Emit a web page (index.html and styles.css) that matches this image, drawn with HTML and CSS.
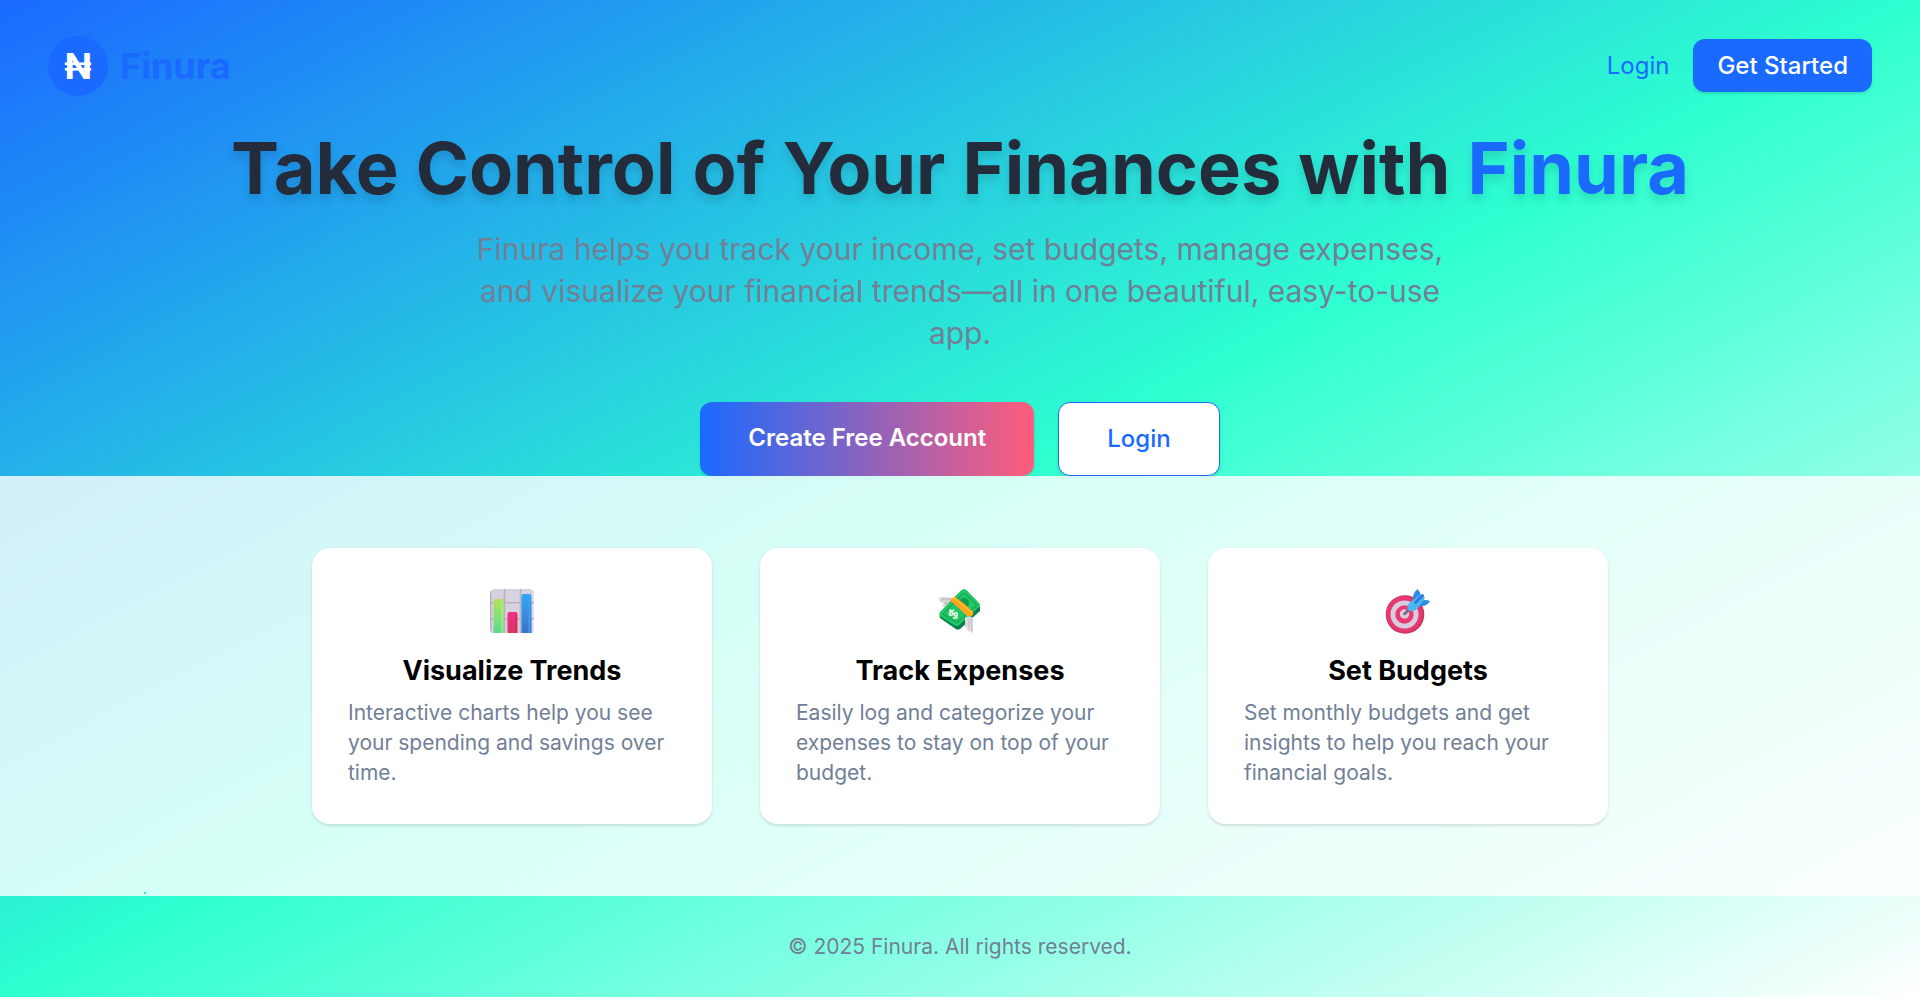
FILE: index.html
```html
<!DOCTYPE html>
<html lang="en">
<head>
<meta charset="utf-8">
<title>Finura</title>
<link rel="stylesheet" href="styles.css">
</head>
<body>
<div class="page">
  <header class="nav">
    <div class="brand"><span class="brand-mark">₦</span><span class="brand-name">Finura</span></div>
    <nav class="nav-links">
      <a class="nav-login">Login</a>
      <a class="nav-cta">Get Started</a>
    </nav>
  </header>
  <main class="hero">
    <h1 class="hero-title">Take Control of Your Finances with <span class="accent">Finura</span></h1>
    <p class="hero-text">Finura helps you track your income, set budgets, manage expenses, and visualize your financial trends—all in one beautiful, easy-to-use app.</p>
    <div class="hero-actions">
      <a class="btn btn-primary">Create Free Account</a>
      <a class="btn btn-outline">Login</a>
    </div>
  </main>
  <section class="features">
    <i class="speck"></i>
    <article class="card">
      <svg class="card-icon" viewBox="0 0 44 44">
        <defs>
          <linearGradient id="g1" x2="0" y2="1"><stop stop-color="#b4e25a"/><stop offset="1" stop-color="#59dc8f"/></linearGradient>
          <linearGradient id="g2" x2="0" y2="1"><stop stop-color="#f0308a"/><stop offset="1" stop-color="#da3562"/></linearGradient>
          <linearGradient id="g3" x2="0" y2="1"><stop stop-color="#35a7f8"/><stop offset="1" stop-color="#3a72c8"/></linearGradient>
          <clipPath id="panel"><rect width="44" height="45" rx="5"/></clipPath>
        </defs>
        <g clip-path="url(#panel)">
          <rect width="44" height="44" fill="#d8d1df"/>
          <path d="M0 0h1.5v44H0z" fill="#b8b1bd"/>
          <path d="M42 0h2v44h-2z" fill="#e6dcf2"/>
          <path d="M14.5 0v44M30.5 0v44M0 13.7h44M0 29.8h44" stroke="#b9b3bd" stroke-width="1.6"/>
          <path d="M3.5 44V12q0-2 2-2h6q2 0 2 2v32z" fill="url(#g1)"/>
          <path d="M11.8 12v32" stroke="#a5f07d" stroke-width="1.4"/>
          <path d="M17.5 44V25q0-2 2-2h6q2 0 2 2v19z" fill="url(#g2)"/>
          <path d="M26.3 25v19" stroke="#ca315f" stroke-width="1.6"/>
          <path d="M31.5 44V7q0-2 2-2h6q2 0 2 2v37z" fill="url(#g3)"/>
          <path d="M39.2 7v37" stroke="#3fa1ed" stroke-width="1.6"/>
        </g>
      </svg>
      <h3 class="card-title">Visualize Trends</h3>
      <p class="card-text">Interactive charts help you see your spending and savings over time.</p>
    </article>
    <article class="card">
      <svg class="card-icon" viewBox="0 0 44 44">
        <path d="M-1 8.500q10-1 18 1l-8 10q-3-1-5-4 2 0 2-1-4-1-6-4 2 0 3-1-3 0-4-1z" fill="#d9d5d9"/>
        <path d="M3 10h11M6 14h7" stroke="#b7b2b8" stroke-width="1"/>
        <path d="M27 27q7-3 8 3v14q-2 0-3-3l-1 2q-2-2-2-5l-1 2q-3-7-1-13z" fill="#dfdadd"/>
        <path d="M30 29v10M33 28v14" stroke="#c4bec2" stroke-width=".9"/>
        <path d="M2 25l28-19 12 12v4L22 40q-3 1.500-5-.5L2 29q-1-2 0-4z" fill="#08804b"/>
        <path d="M2 23L23 1.500q3-3 6 0L41 14q2 2 0 4L21 36q-2.500 2-5 0L2 27q-1.500-2 0-4z" fill="#20c666"/>
        <path d="M5 25L24.500 5q1.500-1.500 3 0L38 15q1 1 0 2L20 33q-1 1-2 0z" fill="none" stroke="#119c50" stroke-width="1"/>
        <circle cx="26" cy="14" r="5" fill="#11994b"/>
        <path d="M27 29q4-3 7.500-.5l.5 5-8 2z" fill="#dfdadd"/>
        <path d="M12 11.500l4.500-4Q26 14 35 22.500q1 3-1 4.500h-5Q21 19 12 11.500z" fill="#faa51c"/>
        <path d="M15.500 8.500L34 24" fill="none" stroke="#ffbe35" stroke-width="1.500"/>
        <g transform="translate(15.500 25) rotate(-42)" fill="none" stroke="#d9f5df" stroke-width="1.8"><path d="M3-2Q0-5-2.500-3T0 0t2 3.200-5-.7M0-6V6"/></g>
        <path d="M28 29q5-3 7 1v14q-2 0-3-3l-1 2q-2-2-2-5l-1 1q-2-5 0-10z" fill="#dfdadd"/>
        <path d="M31 30v9M33.500 29v13" stroke="#c4bec2" stroke-width=".9"/>
      </svg>
      <h3 class="card-title">Track Expenses</h3>
      <p class="card-text">Easily log and categorize your expenses to stay on top of your budget.</p>
    </article>
    <article class="card">
      <svg class="card-icon" viewBox="0 0 44 44">
        <circle cx="19" cy="25.500" r="19.300" fill="#cb3564"/>
        <circle cx="18.300" cy="25" r="18" fill="#e7396f"/>
        <circle cx="18.500" cy="25.500" r="14" fill="#d8cde0"/>
        <circle cx="18.500" cy="25.500" r="9.200" fill="#ec3a70"/>
        <circle cx="18.500" cy="25" r="4.700" fill="#d8cde0"/>
        <path d="M18.500 25l5-5" stroke="#716781" stroke-width="2.500" stroke-linecap="round"/>
        <path d="M27 9q0-5 4.500-9 3 3 3.500 7v6h-8zM31 16l6-5q5 0 7 1-3 5-8 5z" fill="#2a8bea"/>
        <path d="M21.500 20q-1-4 3-7l9-7q3-1 4.500 1t0 4l-7 9q-5 4-9 1z" fill="#4bb8f5"/>
        <path d="M29.500 13.500l7-7" stroke="#2979d8" stroke-width="2.800" stroke-linecap="round"/>
      </svg>
      <h3 class="card-title">Set Budgets</h3>
      <p class="card-text">Set monthly budgets and get insights to help you reach your financial goals.</p>
    </article>
  </section>
  <footer class="footer">© 2025 Finura. All rights reserved.</footer>
</div>
</body>
</html>
```
FILE: styles.css
```css
* { box-sizing: border-box; margin: 0; padding: 0; }
body { font-family: Inter, "Liberation Sans", sans-serif; font-size: 24px; line-height: 36px; color: #000; }
.page {
  height: 997px;
  overflow: hidden;
  display: flex;
  flex-direction: column;
  background: linear-gradient(to bottom right, #1a6aff, #2effd0 50%, #fff);
}
.nav { display: flex; align-items: center; justify-content: space-between; padding: 36px 48px; flex: none; }
.brand { display: flex; align-items: center; gap: 12px; font-size: 36px; line-height: 48px; font-weight: 700; }
.brand-mark { width: 60px; height: 60px; border-radius: 50%; background: #1a6aff; color: #fff; display: flex; align-items: center; justify-content: center; }
.brand-name { color: #1a6aff; }
.nav-links { display: flex; align-items: center; gap: 24px; }
.nav-login { color: #1a6aff; }
.nav-cta { padding: 9px 24px 8px; margin-bottom: 1px; border-radius: 12px; background: #1a6aff; color: #fff; font-weight: 500; box-shadow: 0 1.500px 3px rgba(0,0,0,.12); }
.hero { display: flex; flex-direction: column; align-items: center; text-align: center; flex: none; }
.hero-title { font-size: 72px; line-height: 72px; font-weight: 700; color: #242b3b; filter: drop-shadow(0 6px 4px rgba(0,0,0,.12)); }
.accent { color: #1a6aff; }
.hero-text { width: 1008px; margin-top: 24px; font-size: 30px; line-height: 42px; color: #718096; }
.hero-actions { display: flex; gap: 24px; margin-top: 48px; }
.btn { padding: 18px 48px; border-radius: 12px; box-shadow: 0 1.500px 3px rgba(0,0,0,.12); }
.btn-primary { background: linear-gradient(to right, #1a6aff, #ff5c7c); color: #fff; font-weight: 600; }
.btn-outline { background: #fff; color: #1a6aff; border: 1px solid #1a6aff; font-weight: 500; }
.features { position: relative; display: flex; justify-content: center; gap: 48px; height: 420px; padding: 72px 0; background: rgba(255,255,255,.8); flex: none; }
.speck { position: absolute; left: 144px; top: 416px; width: 2px; height: 2px; background: #2de8cf; }
.card { width: 400px; padding: 36px; border-radius: 18px; background: #fff; box-shadow: 0 1.500px 3px rgba(0,0,0,.12); display: flex; flex-direction: column; align-items: center; }
.card-icon { width: 44px; height: 44px; margin: 5px 0 17px; flex: none; overflow: visible; }
.card-title { font-size: 27px; line-height: 42px; font-weight: 700; }
.card-text { align-self: stretch; margin-top: 6px; font-size: 21px; line-height: 30px; color: #718096; }
.footer { padding: 36px; text-align: center; font-size: 21px; line-height: 30px; color: #718096; }
```
